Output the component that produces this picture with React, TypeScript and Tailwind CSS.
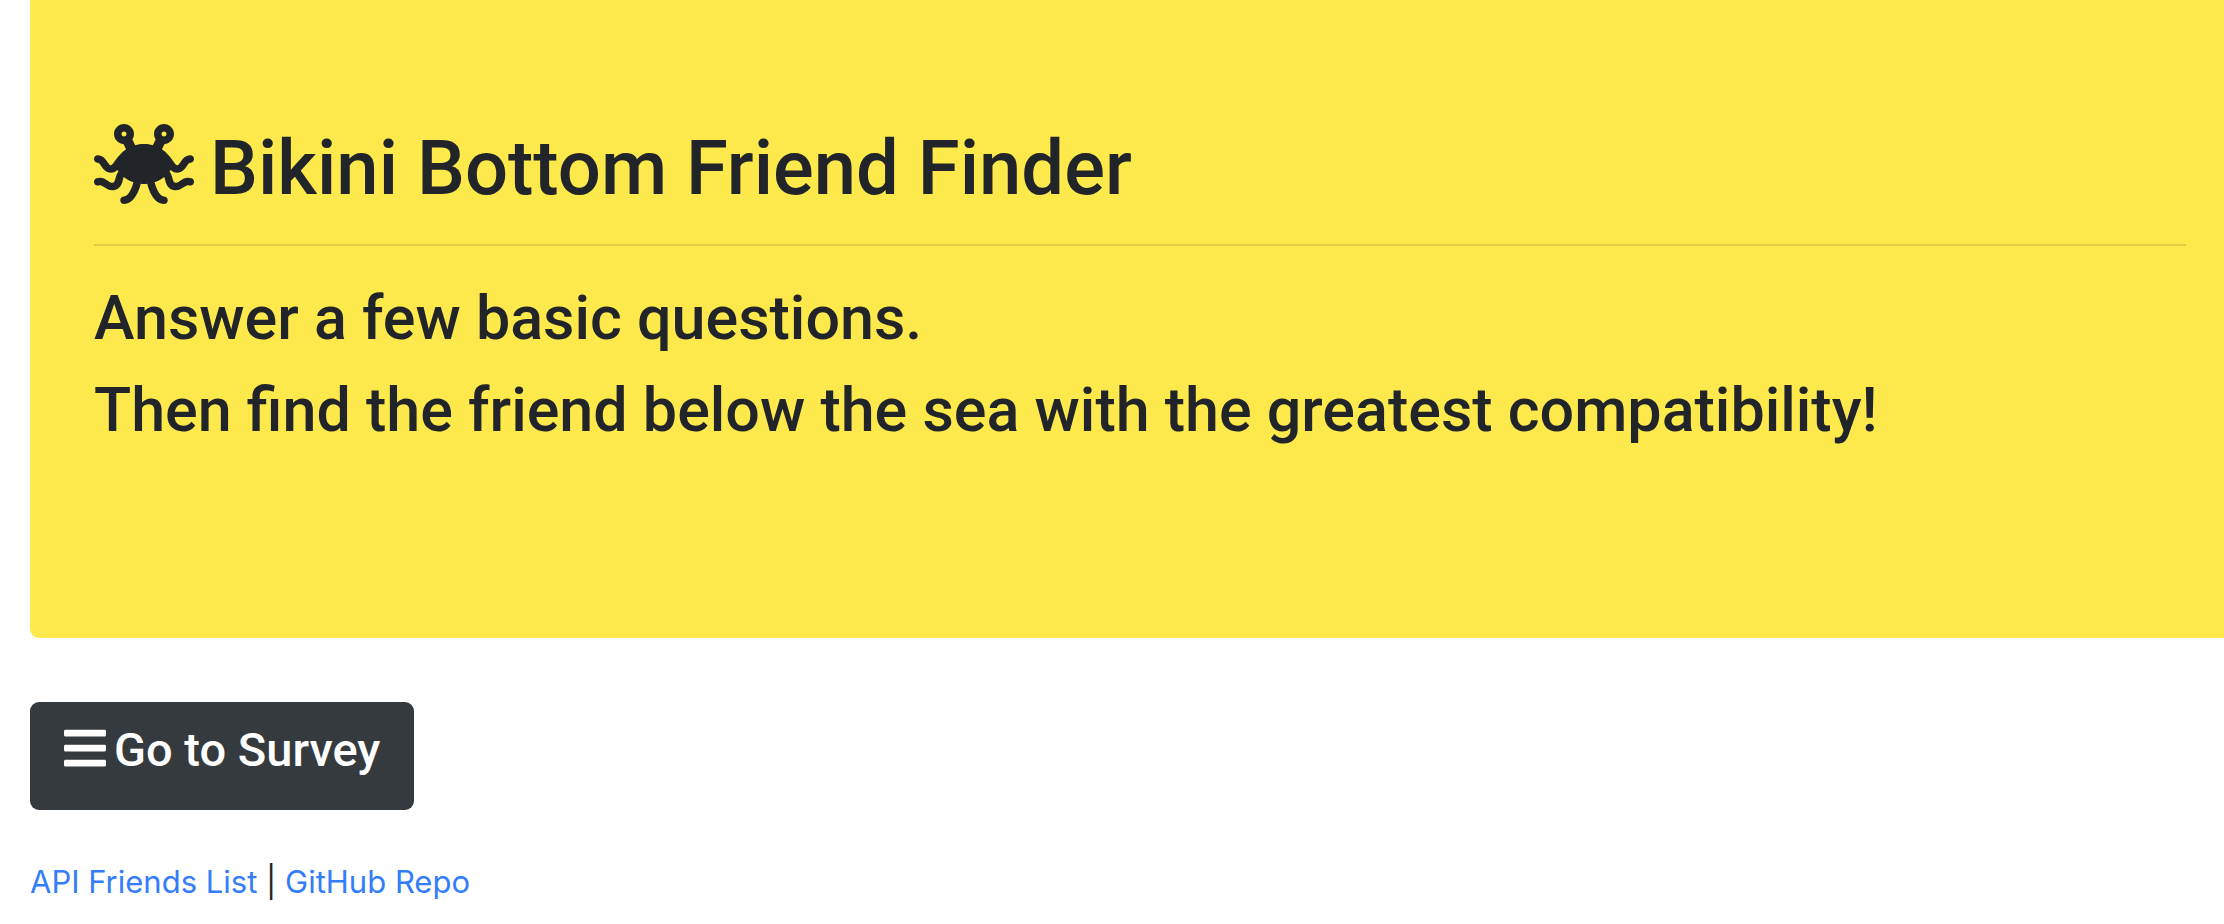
import { FaBars, FaPastafarianism } from "react-icons/fa";

export default function App() {
  return (
    <main className="bg-white pl-[30px] font-[Inter,sans-serif] text-[#212529]">
      <header className="rounded-bl-[9px] bg-[#fde94c] pt-[124px] pr-[38px] pb-[188px] pl-16 font-[Roboto,sans-serif] font-medium">
        <h1 className="flex items-start gap-4 text-[76px] leading-[88px]">
          <FaPastafarianism className="h-20 w-[100px] shrink-0" aria-hidden="true" />
          Bikini Bottom Friend Finder
        </h1>
        <hr className="my-8 border-t-2 border-black/11" />
        <div className="flex flex-col gap-3 text-[61px] leading-[80px]">
          <h2>Answer a few basic questions.</h2>
          <h2>Then find the friend below the sea with the greatest compatibility!</h2>
        </div>
      </header>
      <button
        type="button"
        className="mt-16 block rounded-[9px] bg-[#353a3e] px-[34px] pt-4 pb-7 font-[Roboto,sans-serif] text-[47px] leading-[64px] font-medium text-white"
      >
        <FaBars className="mr-2 inline-block h-12 w-[42px] align-[-6px]" aria-hidden="true" />
        Go to Survey
      </button>
      <footer className="mt-12 text-[31px] leading-[48px]">
        <a href="#api" className="text-[#347dfa]">API Friends List</a>
        {" | "}
        <a href="#github" className="text-[#347dfa]">GitHub Repo</a>
      </footer>
    </main>
  );
}
